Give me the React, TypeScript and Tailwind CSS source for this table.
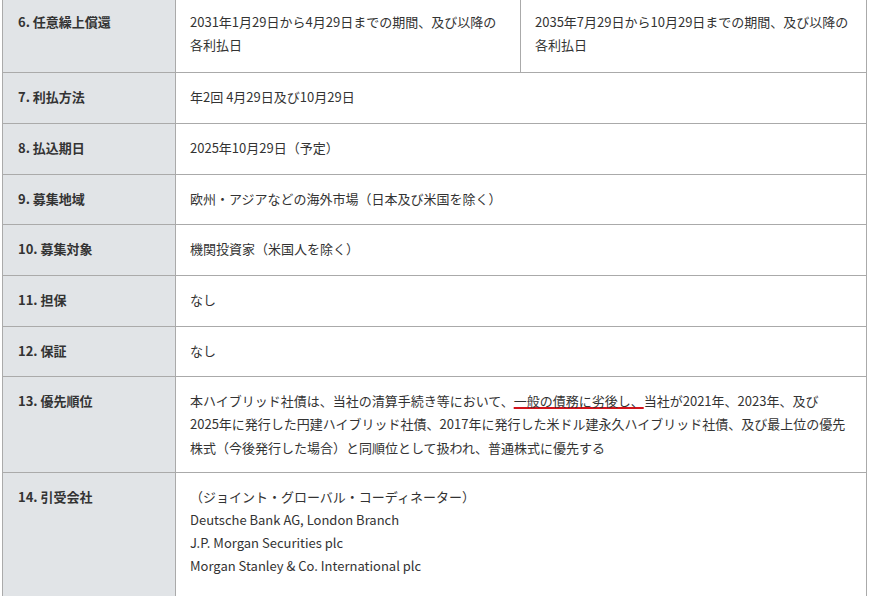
import React from "react";

const label =
  "border-r border-b border-[#aaaaaa] bg-[#e1e4e7] pl-[15px] pr-[10px] font-bold text-[#333333]";
const value =
  "border-r border-b border-[#aaaaaa] bg-white pl-[14px] pr-[14px] text-[#333333]";

type Row = { no: string; content: React.ReactNode; size: string };

const rows: Row[] = [
  { no: "7. 利払方法", size: "py-[12px] min-h-[51px]", content: "年2回 4月29日及び10月29日" },
  { no: "8. 払込期日", size: "py-[12px] min-h-[51px]", content: "2025年10月29日（予定）" },
  { no: "9. 募集地域", size: "py-[12px] min-h-[50px]", content: "欧州・アジアなどの海外市場（日本及び米国を除く）" },
  { no: "10. 募集対象", size: "py-[12px] min-h-[51px]", content: "機関投資家（米国人を除く）" },
  { no: "11. 担保", size: "py-[12px] min-h-[51px]", content: "なし" },
  { no: "12. 保証", size: "py-[12px] min-h-[50px]", content: "なし" },
  {
    no: "13. 優先順位",
    size: "pt-[12px] pb-[13px]",
    content: (
      <>
        本ハイブリッド社債は、当社の清算手続き等において、
        <span className="underline decoration-[#d4141c] decoration-2 underline-offset-[1px]">
          一般の債務に劣後し、
        </span>
        当社が2021年、2023年、及び
        <br />
        2025年に発行した円建ハイブリッド社債、2017年に発行した米ドル建永久ハイブリッド社債、及び最上位の優先
        <br />
        株式（今後発行した場合）と同順位として扱われ、普通株式に優先する
      </>
    ),
  },
  {
    no: "14. 引受会社",
    size: "pt-[12px] pb-[32px]",
    content: (
      <div>
        <div className="leading-[23px]">（ジョイント・グローバル・コーディネーター）</div>
        <div className="leading-[23px]">Deutsche Bank AG, London Branch</div>
        <div className="leading-[23px]">J.P. Morgan Securities plc</div>
        <div className="leading-[23px]">Morgan Stanley &amp; Co. International plc</div>
        <div className="leading-[23px]">&nbsp;</div>
      </div>
    ),
  },
];

export default function App() {
  return (
    <div
      className="w-[874px] h-[596px] overflow-hidden bg-white text-[13px] leading-[23.4px]"
      style={{ fontFamily: '"Noto Sans CJK JP", "Noto Sans", sans-serif' }}
    >
      <div className="ml-[2px] w-[865px] border-l border-[#aaaaaa] grid grid-cols-[173px_345px_346px]">
        <div className={`${label} pt-[10px] pb-[15px]`}>6. 任意繰上償還</div>
        <div className={`${value} pt-[10px] pb-[15px]`}>
          2031年1月29日から4月29日までの期間、及び以降の
          <br />
          各利払日
        </div>
        <div className={`${value} pt-[10px] pb-[15px]`}>
          2035年7月29日から10月29日までの期間、及び以降の
          <br />
          各利払日
        </div>
        {rows.map((r) => (
          <React.Fragment key={r.no}>
            <div className={`${label} ${r.size}`}>{r.no}</div>
            <div className={`${value} col-span-2 ${r.size}`}>{r.content}</div>
          </React.Fragment>
        ))}
      </div>
    </div>
  );
}
